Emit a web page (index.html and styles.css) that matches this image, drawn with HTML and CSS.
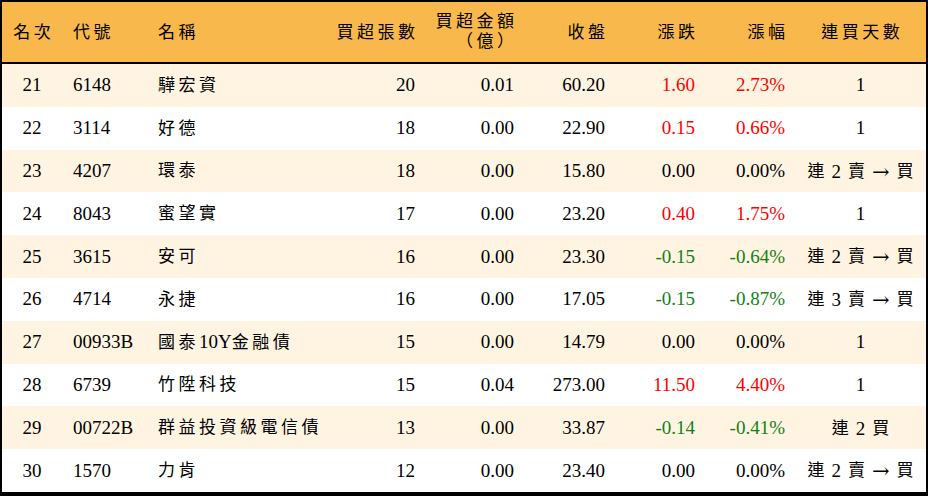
FILE: index.html
```html
<!DOCTYPE html>
<html lang="zh-Hant">
<head>
<meta charset="utf-8">
<link rel="stylesheet" href="styles.css">
</head>
<body>
<div class="board">
  <div class="row head">
    <div class="c ctr"><span class="cjk">名次</span></div>
    <div class="c left"><span class="cjk">代號</span></div>
    <div class="c left"><span class="cjk">名稱</span></div>
    <div class="c right"><span class="cjk">買超張數</span></div>
    <div class="c right two"><span class="cjk">買超金額</span><span class="cjk">（億）</span></div>
    <div class="c right"><span class="cjk">收盤</span></div>
    <div class="c right"><span class="cjk">漲跌</span></div>
    <div class="c right"><span class="cjk">漲幅</span></div>
    <div class="c ctr"><span class="cjk">連買天數</span></div>
  </div>

  <div class="row alt">
    <div class="c ctr">21</div><div class="c left">6148</div><div class="c left"><span class="cjk">驊宏資</span></div>
    <div class="c right">20</div><div class="c right">0.01</div><div class="c right">60.20</div>
    <div class="c right up">1.60</div><div class="c right up">2.73%</div><div class="c ctr">1</div>
  </div>
  <div class="row">
    <div class="c ctr">22</div><div class="c left">3114</div><div class="c left"><span class="cjk">好德</span></div>
    <div class="c right">18</div><div class="c right">0.00</div><div class="c right">22.90</div>
    <div class="c right up">0.15</div><div class="c right up">0.66%</div><div class="c ctr">1</div>
  </div>
  <div class="row alt">
    <div class="c ctr">23</div><div class="c left">4207</div><div class="c left"><span class="cjk">環泰</span></div>
    <div class="c right">18</div><div class="c right">0.00</div><div class="c right">15.80</div>
    <div class="c right">0.00</div><div class="c right">0.00%</div>
    <div class="c ctr"><span class="days"><span class="ch">連</span><span>2</span><span class="ch">賣</span><span class="arrow">→</span><span class="ch">買</span></span></div>
  </div>
  <div class="row">
    <div class="c ctr">24</div><div class="c left">8043</div><div class="c left"><span class="cjk">蜜望實</span></div>
    <div class="c right">17</div><div class="c right">0.00</div><div class="c right">23.20</div>
    <div class="c right up">0.40</div><div class="c right up">1.75%</div><div class="c ctr">1</div>
  </div>
  <div class="row alt">
    <div class="c ctr">25</div><div class="c left">3615</div><div class="c left"><span class="cjk">安可</span></div>
    <div class="c right">16</div><div class="c right">0.00</div><div class="c right">23.30</div>
    <div class="c right down">-0.15</div><div class="c right down">-0.64%</div>
    <div class="c ctr"><span class="days"><span class="ch">連</span><span>2</span><span class="ch">賣</span><span class="arrow">→</span><span class="ch">買</span></span></div>
  </div>
  <div class="row">
    <div class="c ctr">26</div><div class="c left">4714</div><div class="c left"><span class="cjk">永捷</span></div>
    <div class="c right">16</div><div class="c right">0.00</div><div class="c right">17.05</div>
    <div class="c right down">-0.15</div><div class="c right down">-0.87%</div>
    <div class="c ctr"><span class="days"><span class="ch">連</span><span>3</span><span class="ch">賣</span><span class="arrow">→</span><span class="ch">買</span></span></div>
  </div>
  <div class="row alt">
    <div class="c ctr">27</div><div class="c left">00933B</div><div class="c left"><span class="cjk">國泰</span><span class="num">10Y</span><span class="cjk">金融債</span></div>
    <div class="c right">15</div><div class="c right">0.00</div><div class="c right">14.79</div>
    <div class="c right">0.00</div><div class="c right">0.00%</div><div class="c ctr">1</div>
  </div>
  <div class="row">
    <div class="c ctr">28</div><div class="c left">6739</div><div class="c left"><span class="cjk">竹陞科技</span></div>
    <div class="c right">15</div><div class="c right">0.04</div><div class="c right">273.00</div>
    <div class="c right up">11.50</div><div class="c right up">4.40%</div><div class="c ctr">1</div>
  </div>
  <div class="row alt">
    <div class="c ctr">29</div><div class="c left">00722B</div><div class="c left"><span class="cjk">群益投資級電信債</span></div>
    <div class="c right">13</div><div class="c right">0.00</div><div class="c right">33.87</div>
    <div class="c right down">-0.14</div><div class="c right down">-0.41%</div>
    <div class="c ctr"><span class="days"><span class="ch">連</span><span>2</span><span class="ch">買</span></span></div>
  </div>
  <div class="row">
    <div class="c ctr">30</div><div class="c left">1570</div><div class="c left"><span class="cjk">力肯</span></div>
    <div class="c right">12</div><div class="c right">0.00</div><div class="c right">23.40</div>
    <div class="c right">0.00</div><div class="c right">0.00%</div>
    <div class="c ctr"><span class="days"><span class="ch">連</span><span>2</span><span class="ch">賣</span><span class="arrow">→</span><span class="ch">買</span></span></div>
  </div>
</div>
</body>
</html>
```

FILE: styles.css
```css
html, body {
  margin: 0;
  padding: 0;
  background: #ffffff;
}

body {
  font-family: "Liberation Serif", "Noto Sans CJK TC", serif;
  font-size: 19px;
  color: #000000;
}

.board {
  width: 928px;
  height: 496px;
  box-sizing: border-box;
  border: 2px solid #000000;
  border-bottom-width: 4px;
  overflow: hidden;
}

.row {
  display: grid;
  grid-template-columns: 60px 85px 173px 105px 99px 91px 90px 90px 131px;
  height: 42.8px;
  align-items: center;
  background: #ffffff;
}

.row.alt {
  background: #fff4e1;
}

.row.head {
  height: 60px;
  background: #f9b84b;
  border-bottom: 2px solid #000000;
}

.c {
  white-space: nowrap;
  line-height: 20px;
}

.ctr {
  text-align: center;
}

.left {
  padding-left: 11px;
}

.right {
  text-align: right;
  padding-right: 10px;
}

.cjk {
  font-size: 17px;
  letter-spacing: 3.5px;
}

.num {
  font-size: 19px;
  letter-spacing: 0;
}

.right .cjk {
  margin-right: -3.5px;
}

.ctr .cjk {
  margin-right: -3.5px;
}

.two {
  display: flex;
  flex-direction: column;
  align-items: flex-end;
}

.days {
  display: inline-flex;
  align-items: center;
  gap: 7px;
  vertical-align: middle;
}

.days .ch {
  font-size: 17px;
}

.days .arrow {
  font-family: "DejaVu Serif", serif;
  font-size: 21px;
}

.up {
  color: #ff0000;
}

.down {
  color: #14801a;
}
```
